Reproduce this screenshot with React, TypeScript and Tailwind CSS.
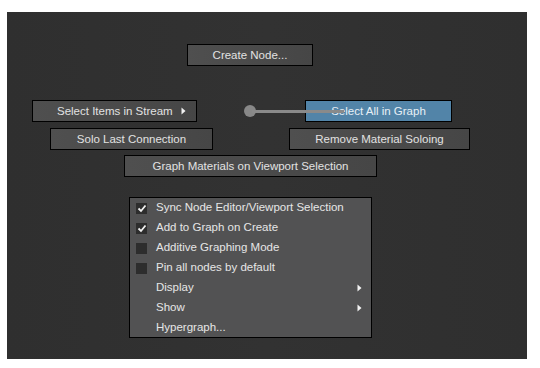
import React from "react";

const font = { fontFamily: '"Liberation Sans", Arial, sans-serif' };

function Btn({ children, className = "" }: { children: React.ReactNode; className?: string }) {
  return (
    <div
      className={`h-[22px] border border-black bg-gradient-to-r from-[#4f4f4f] to-[#464646] text-[#e2e2e2] text-[11.5px] leading-[20px] text-center ${className}`}
    >
      {children}
    </div>
  );
}

function Check({ on }: { on: boolean }) {
  return (
    <div className="w-[11px] h-[11px] bg-[#2d2d2d] flex items-center justify-center">
      {on && (
        <svg width="10" height="9" viewBox="0 0 10 9">
          <path d="M1.5 4.5 L4 7 L8.5 1.5" stroke="#f0f0f0" strokeWidth="1.8" fill="none" />
        </svg>
      )}
    </div>
  );
}

function Arrow() {
  return (
    <svg width="5" height="8" viewBox="0 0 5 8">
      <path d="M0.5 0.5 L4.5 4 L0.5 7.5 Z" fill="#f2f2f2" />
    </svg>
  );
}

function MenuRow({ check, label, arrow }: { check?: boolean | null; label: string; arrow?: boolean }) {
  return (
    <div className="h-5 flex items-center">
      <div className="w-[11px] ml-[6px] mr-[9px]">{check !== undefined && check !== null && <Check on={check} />}</div>
      <span className="flex-1 text-[11.5px] text-[#e6e6e6]">{label}</span>
      {arrow && (
        <div className="mr-[9px] flex items-center">
          <Arrow />
        </div>
      )}
    </div>
  );
}

export default function App() {
  return (
    <div className="w-[540px] h-[368px] bg-white pl-[7px] pt-[12px]" style={font}>
      <div className="w-[520px] h-[347px] bg-gradient-to-r from-[#2f2f2f] via-[#323232] to-[#2f2f2f] flex flex-col">
        <div className="pt-[32px] pl-[180px]">
          <Btn className="w-[126px]">Create Node...</Btn>
        </div>
        <div className="mt-[34px] flex items-center">
          <Btn className="ml-[25px] w-[165px] flex items-center pl-[24px] pr-[10px]">
            <span>Select Items in Stream</span>
            <span className="ml-auto flex items-center">
              <Arrow />
            </span>
          </Btn>
          <div className="relative ml-[47px] w-[61px] h-[22px]">
            <div className="absolute left-0 top-[5px] w-[12px] h-[12px] rounded-full bg-[#888888]" />
            <Btn className="absolute left-[61px] top-0 w-[147px] !bg-none bg-[#5284a8] text-[#e8f0f6]">Select All in Graph</Btn>
            <div className="absolute left-[8px] top-[9.5px] w-[92px] h-[3px] bg-[#8a8a8a]" />
          </div>
        </div>
        <div className="mt-[6px] flex">
          <Btn className="ml-[43px] w-[163px]">Solo Last Connection</Btn>
          <Btn className="ml-[76px] w-[181px]">Remove Material Soloing</Btn>
        </div>
        <div className="mt-[5px] flex">
          <Btn className="ml-[117px] w-[253px]">Graph Materials on Viewport Selection</Btn>
        </div>
        <div className="mt-[20px] ml-[122px] w-[243px] h-[141px] border border-black bg-[#525253] overflow-hidden">
          <MenuRow check={true} label="Sync Node Editor/Viewport Selection" />
          <MenuRow check={true} label="Add to Graph on Create" />
          <MenuRow check={false} label="Additive Graphing Mode" />
          <MenuRow check={false} label="Pin all nodes by default" />
          <MenuRow check={null} label="Display" arrow />
          <MenuRow check={null} label="Show" arrow />
          <MenuRow check={null} label="Hypergraph..." />
        </div>
      </div>
    </div>
  );
}
